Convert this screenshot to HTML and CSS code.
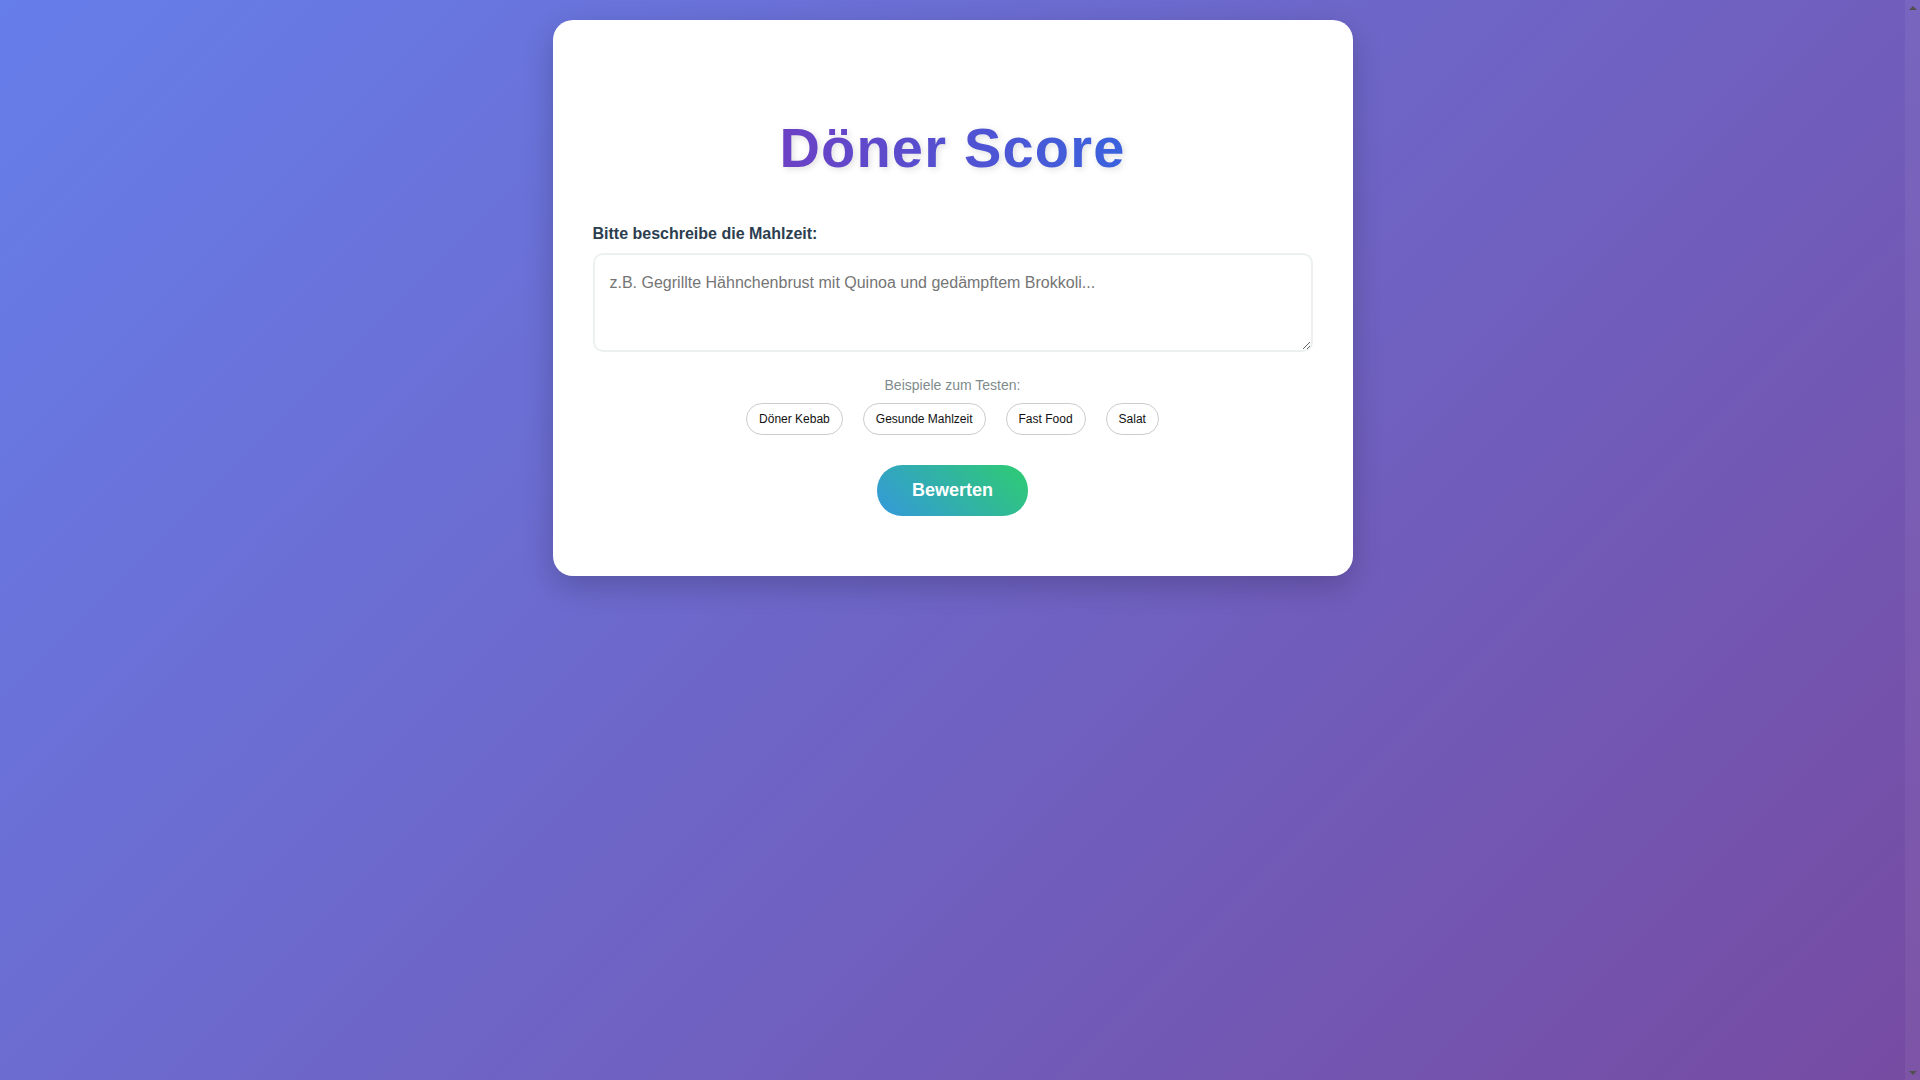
FILE: index.html
```html
<!DOCTYPE html>
<html lang="de">
<head>
<meta charset="utf-8">
<title>Döner Score</title>
<link rel="stylesheet" href="styles.css">
</head>
<body>
<div class="page">
  <main class="card">
    <h1 class="title"><span class="title-text">Döner Score</span></h1>
    <label class="label" for="meal">Bitte beschreibe die Mahlzeit:</label>
    <textarea id="meal" class="meal-input" placeholder="z.B. Gegrillte Hähnchenbrust mit Quinoa und gedämpftem Brokkoli..."></textarea>
    <div class="examples">
      <p class="examples-title">Beispiele zum Testen:</p>
      <div class="chips">
        <button class="chip" type="button">Döner Kebab</button>
        <button class="chip" type="button">Gesunde Mahlzeit</button>
        <button class="chip" type="button">Fast Food</button>
        <button class="chip" type="button">Salat</button>
      </div>
    </div>
    <div class="actions">
      <button class="submit" type="button">Bewerten</button>
    </div>
  </main>
</div>
<div class="scrollbar" aria-hidden="true">
  <span class="scroll-arrow scroll-up"></span>
  <span class="scroll-track"></span>
  <span class="scroll-arrow scroll-down"></span>
</div>
</body>
</html>
```

FILE: styles.css
```css
* {
  box-sizing: border-box;
}

html {
  height: 100%;
  overflow: hidden;
}

body {
  margin: 0;
  height: 100%;
  font-family: "Liberation Sans", Arial, sans-serif;
  background: linear-gradient(135deg, #667eea 0%, #764ba2 100%);
}

.page {
  min-height: 100%;
  padding: 20px 35px 20px 20px;
}

.card {
  display: block;
  max-width: 800px;
  margin: 0 auto;
  padding: 40px 40px 60px;
  background: #ffffff;
  border-radius: 20px;
  box-shadow: 0 10px 30px rgba(0, 0, 0, 0.2);
}

.title {
  margin: 55px 0 45px;
  text-align: center;
  font-size: 56px;
  font-weight: bold;
  line-height: normal;
  letter-spacing: 1.2px;
  filter: drop-shadow(2px 2px 3px rgba(0, 0, 0, 0.12));
}

.title-text {
  display: inline-block;
  background: linear-gradient(90deg, #6c40c4 0%, #3a62de 100%);
  -webkit-background-clip: text;
  background-clip: text;
  -webkit-text-fill-color: transparent;
  color: transparent;
}

.label {
  display: block;
  margin-bottom: 10px;
  font-size: 16px;
  font-weight: bold;
  color: #2c3e50;
}

.meal-input {
  display: block;
  width: 100%;
  height: 99px;
  padding: 19px 15px 15px;
  border: 2px solid #ecf0f1;
  border-radius: 10px;
  font-family: "Liberation Sans", Arial, sans-serif;
  font-size: 16px;
  color: #2c3e50;
  background: #ffffff;
}

.meal-input::placeholder {
  color: #757575;
}

.examples {
  margin-top: 25px;
  text-align: center;
}

.examples-title {
  margin: 0 0 10px;
  font-size: 14px;
  color: #7f8c8d;
}

.chips {
  display: flex;
  justify-content: center;
  gap: 20px;
}

.chip {
  padding: 8px 12px;
  border: 1px solid #cccccc;
  border-radius: 20px;
  background: #ffffff;
  font-family: "Liberation Sans", Arial, sans-serif;
  font-size: 12px;
  line-height: normal;
  color: #111111;
}

.actions {
  display: flex;
  justify-content: center;
  margin-top: 30px;
}

.submit {
  padding: 15px 35px;
  border: none;
  border-radius: 25px;
  background: linear-gradient(45deg, #3498db, #2ecc71);
  color: #ffffff;
  font-family: "Liberation Sans", Arial, sans-serif;
  font-size: 18px;
  font-weight: bold;
  line-height: normal;
}

.scrollbar {
  position: fixed;
  top: 0;
  right: 0;
  bottom: 0;
  width: 15px;
  display: flex;
  flex-direction: column;
  background: rgba(255, 255, 255, 0.05);
}

.scroll-arrow {
  flex: 0 0 15px;
  display: flex;
  align-items: center;
  justify-content: center;
}

.scroll-arrow::before {
  content: "";
  width: 0;
  height: 0;
  border-left: 4px solid transparent;
  border-right: 4px solid transparent;
}

.scroll-up::before {
  border-bottom: 4px solid #505050;
}

.scroll-down::before {
  border-top: 4px solid #505050;
}

.scroll-track {
  flex: 1;
}
```
